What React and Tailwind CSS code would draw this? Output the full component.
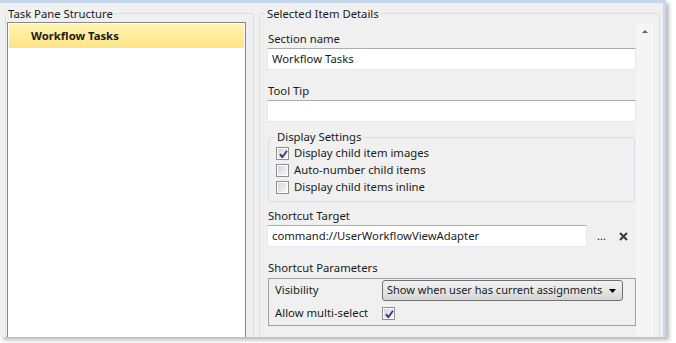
import React from 'react';

function Check({ checked }) {
  return (
    <span className="flex-none w-[13px] h-[13px] border border-[#8e8f8f] bg-white p-[1px]">
      <span className="relative block w-full h-full bg-gradient-to-br from-[#d3d6da] to-[#f8f8f8]">
        {checked && (
          <svg className="absolute left-0 top-0" width="11" height="11" viewBox="0 0 11 11">
            <path d="M2 5.2 L4.3 8.2 L9 1.8" fill="none" stroke="#35378a" strokeWidth="1.9" strokeLinejoin="round" />
          </svg>
        )}
      </span>
    </span>
  );
}

function TextBox({ value, className = '' }) {
  return (
    <div className={`h-[22px] bg-white border border-[#e3e9ef] border-t-[#abadb3] flex items-center pl-[4px] whitespace-nowrap ${className}`}>
      {value}
    </div>
  );
}

function Label({ children, className = '' }) {
  return <div className={`h-[16px] leading-[16px] pl-[1px] ${className}`}>{children}</div>;
}

export default function App() {
  return (
    <div className="w-[676px] h-[343px] bg-white overflow-hidden text-[11.3px] text-[#1a1a1a] font-['Noto_Sans',sans-serif]">
      <div className="w-[666px] h-[337px] bg-[#f0f0f0] border-t-[3px] border-r-[3px] border-[#c6d8ee] shadow-[3px_3px_4px_rgba(0,0,0,0.28)] flex overflow-hidden">
        <fieldset className="flex-none ml-[5px] mt-[3px] w-[249px] h-[360px] border border-[#d5dfe5] rounded-[3px] pl-[1px] pr-[7px]">
          <legend className="px-[1px] leading-[15px]">Task Pane Structure</legend>
          <div className="mt-[1px] h-[340px] bg-white border border-[#828790] p-[1px]">
            <div className="h-[24px] bg-gradient-to-b from-[#fff4b0] to-[#ffe486] flex items-center pl-[22px] font-bold">
              Workflow Tasks
            </div>
          </div>
        </fieldset>

        <fieldset className="flex-none ml-[5px] mt-[3px] w-[401px] h-[360px] border border-[#d5dfe5] rounded-[3px]">
          <legend className="ml-[5px] px-[2px] leading-[15px]">Selected Item Details</legend>
          <div className="flex">
            <div className="pl-[7px] w-[376px] pt-[10px]">
              <Label>Section name</Label>
              <TextBox className="mt-[1px]" value="Workflow Tasks" />
              <Label className="mt-[13px]">Tool Tip</Label>
              <TextBox className="mt-[1px]" value="" />

              <fieldset className="mt-[7px] ml-[1px] w-[367px] border border-[#d5dfe5] rounded-[3px] pl-[7px] pb-[5px]">
                <legend className="ml-[-1px] px-[2px] leading-[16px]">Display Settings</legend>
                {[
                  ['Display child item images', true],
                  ['Auto-number child items', false],
                  ['Display child items inline', false],
                ].map(([t, c]) => (
                  <div key={t} className="h-[17px] flex items-center gap-[5px]">
                    <Check checked={c} />
                    <span>{t}</span>
                  </div>
                ))}
              </fieldset>

              <Label className="mt-[6px]">Shortcut Target</Label>
              <div className="mt-[1px] flex items-center">
                <TextBox className="w-[320px]" value="command://UserWorkflowViewAdapter" />
                <span className="ml-[10px] leading-[12px] text-[11px]">...</span>
                <svg className="ml-[13px]" width="9" height="9" viewBox="0 0 9 9">
                  <path d="M1 1 L8 8 M8 1 L1 8" stroke="#3a3a3a" strokeWidth="2" />
                </svg>
              </div>

              <Label className="mt-[13px]">Shortcut Parameters</Label>
              <div className="mt-[2px] ml-[1px] w-[368px] border border-[#a0a0a0] py-[1px]">
                <div className="h-[22px] flex items-start">
                  <div className="w-[113px] pl-[6px] h-[21px] flex items-center">Visibility</div>
                  <div className="w-[241px] h-[21px] rounded-[3px] border border-[#707070] bg-gradient-to-b from-[#f2f2f2] via-[#e6e6e6] to-[#d4d4d4] flex items-center pl-[4px] pr-[6px] justify-between whitespace-nowrap">
                    <span className="text-[11px]">Show when user has current assignments</span>
                    <svg width="7" height="4" viewBox="0 0 7 4">
                      <path d="M0 0 H7 L3.5 4 Z" fill="#000" />
                    </svg>
                  </div>
                </div>
                <div className="h-[22px] flex items-center">
                  <div className="w-[113px] pl-[6px]">Allow multi-select</div>
                  <Check checked />
                </div>
              </div>
            </div>
            <div className="mt-[2px] w-[17px] h-[330px] bg-[#f5f5f5] flex justify-center pt-[7px]">
              <svg width="6" height="3" viewBox="0 0 6 3">
                <path d="M3 0 L6 3 H0 Z" fill="#606060" />
              </svg>
            </div>
          </div>
        </fieldset>
      </div>
    </div>
  );
}
